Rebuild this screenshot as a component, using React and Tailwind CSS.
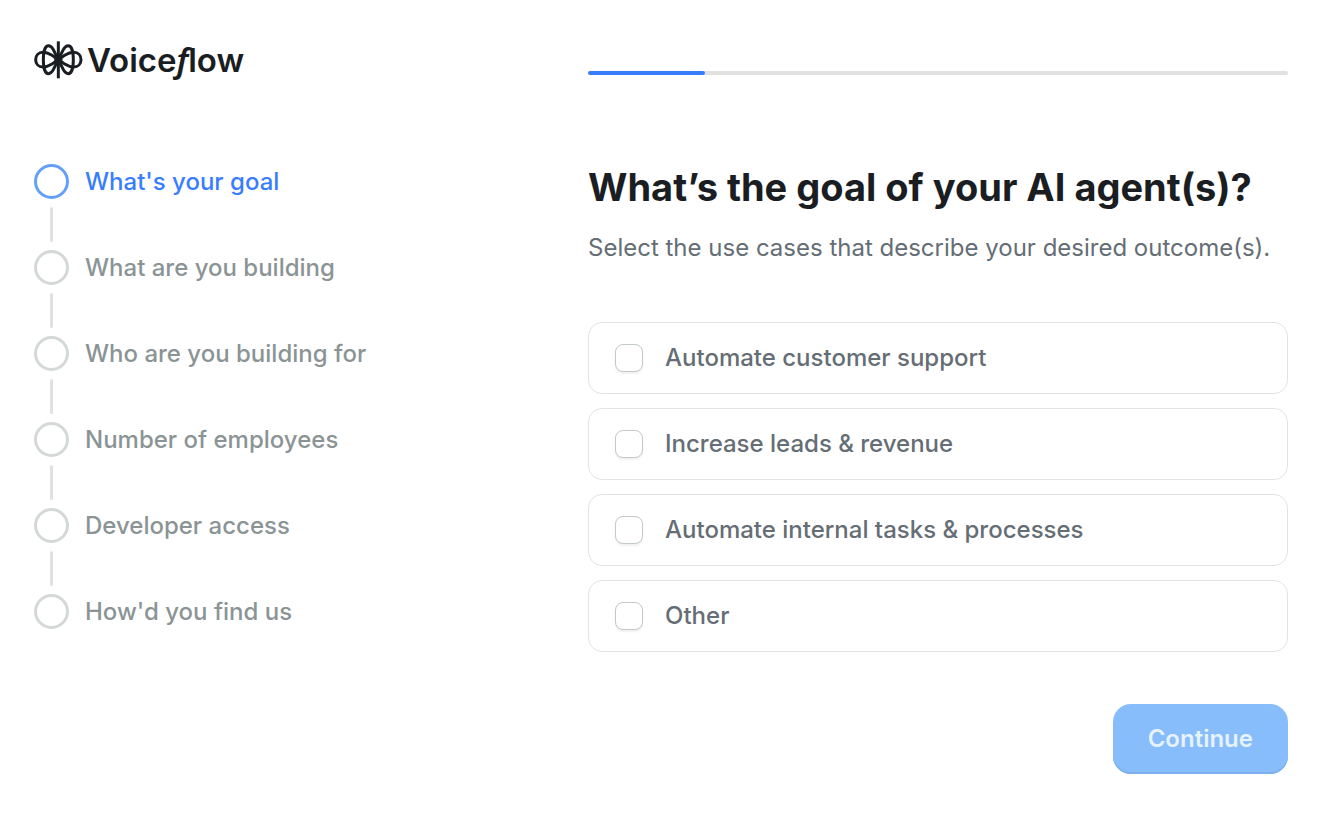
import React, { useState } from "react";

const steps = [
  "What's your goal",
  "What are you building",
  "Who are you building for",
  "Number of employees",
  "Developer access",
  "How'd you find us",
];

const goals = [
  "Automate customer support",
  "Increase leads & revenue",
  "Automate internal tasks & processes",
  "Other",
];

function Logo() {
  return (
    <a href="#" className="flex h-10 items-center gap-[3px] text-[#1a1e23]">
      <svg
        viewBox="30 32 150 114"
        className="h-[38px] w-[50px] shrink-0"
        fill="none"
        stroke="currentColor"
        strokeWidth="9"
        strokeLinejoin="round"
        aria-hidden="true"
      >
        <path d="M103 33V144" />
        {/* Side lobes */}
        <path d="M103 88L84 75C74 69 68 66 57 66C43 66 35 76 35 88C35 100 43 110 57 110C68 110 74 107 84 101Z" />
        <path d="M103 88L122 75C132 69 138 66 149 66C163 66 171 76 171 88C171 100 163 110 149 110C138 110 132 107 122 101Z" />
        {/* Upper and lower petals */}
        <path d="M103 88L88 58C84 50 79 46 73 46C63 46 58 66 58 88C58 110 63 130 73 130C79 130 84 126 88 118Z" />
        <path d="M103 88L118 58C122 50 127 46 133 46C143 46 148 66 148 88C148 110 143 130 133 130C127 130 122 126 118 118Z" />
        <circle cx="103" cy="88" r="8" fill="currentColor" />
      </svg>
      <span className="text-[33px] leading-10 font-semibold">
        Voice
        <span className="font-['Noto_Sans',sans-serif] italic">f</span>
        low
      </span>
    </a>
  );
}

function Steps({ current }) {
  return (
    <ol className="mt-[84px] flex flex-col gap-2">
      {steps.map((step, index) => (
        <li key={step} className="flex flex-col gap-2">
          <div className="flex items-center gap-4">
            <span
              className={`size-[35px] shrink-0 rounded-full border-3 ${
                index === current ? "border-[#659ffc]" : "border-[#d4d8d8]"
              }`}
            />
            <span
              className={`text-2xl leading-[35px] font-medium ${
                index === current ? "text-[#397dff]" : "text-[#8b9495]"
              }`}
            >
              {step}
            </span>
          </div>
          {index < steps.length - 1 && (
            <span className="ml-4 h-[35px] w-[3px] rounded-full bg-[#e0e2e2]" />
          )}
        </li>
      ))}
    </ol>
  );
}

function App() {
  const [selected, setSelected] = useState([]);

  const toggleGoal = (goal) => {
    setSelected((prev) =>
      prev.includes(goal) ? prev.filter((g) => g !== goal) : [...prev, goal]
    );
  };

  const progress = (1 / steps.length) * 100;

  return (
    <div className="flex min-h-screen bg-white pt-10 pr-14 pb-10 pl-[34px] font-['Inter',sans-serif]">
      <aside className="w-[554px] shrink-0">
        <Logo />
        <Steps current={0} />
      </aside>

      <main className="min-w-0 flex-1 pt-[31px]">
        <div className="h-1 rounded-full bg-[#e0e2e2]">
          <div
            className="h-1 rounded-full bg-[#397dff]"
            style={{ width: `${progress}%` }}
          />
        </div>

        <h1 className="mt-[87px] text-[38px] leading-[50px] font-bold text-[#1a1e23]">
          What’s the goal of your AI agent(s)?
        </h1>
        <p className="mt-[18px] text-2xl leading-[36px] text-[#656d75]">
          Select the use cases that describe your desired outcome(s).
        </p>

        <form onSubmit={(e) => e.preventDefault()}>
          <div className="mt-14 flex flex-col gap-3.5">
            {goals.map((goal) => (
              <label
                key={goal}
                className="flex h-[72px] cursor-pointer items-center gap-[22px] rounded-[14px] border border-[#e2e4e4] px-[26px] text-2xl font-medium text-[#656d75]"
              >
                <input
                  type="checkbox"
                  checked={selected.includes(goal)}
                  onChange={() => toggleGoal(goal)}
                  className="size-7 shrink-0 appearance-none rounded-lg border border-[#c3c8c8] bg-white shadow-[0_2px_2px_rgba(0,0,0,0.06)] checked:border-[#397dff] checked:bg-[#397dff]"
                />
                {goal}
              </label>
            ))}
          </div>

          <div className="mt-[52px] flex justify-end">
            <button
              type="submit"
              className="h-[70px] rounded-[18px] bg-[#87bdfa] px-[35px] text-2xl font-semibold text-[#e6f2fe] shadow-[inset_0_-2px_0_#7cb0ee]"
            >
              Continue
            </button>
          </div>
        </form>
      </main>
    </div>
  );
}

export default App;
